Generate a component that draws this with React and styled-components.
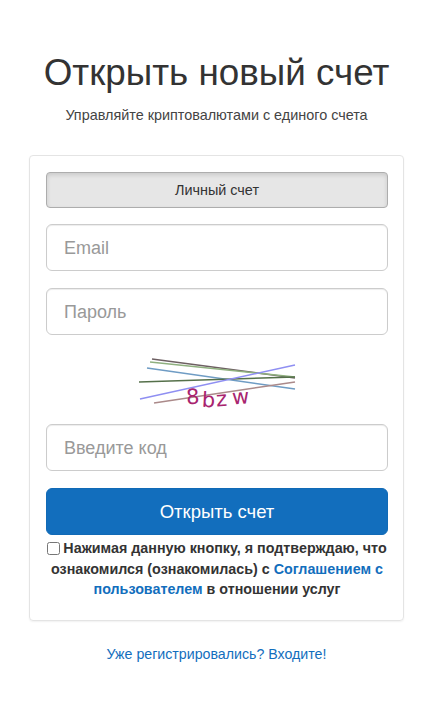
import React from "react";
import styled, { createGlobalStyle } from "styled-components";

const GlobalStyle = createGlobalStyle`
  html, body {
    margin: 0;
    background: #fff;
  }
  body {
    font-family: "Liberation Sans", Arial, sans-serif;
    color: #333;
  }
`;

const Page = styled.div`
  width: 423px;
  height: 710px;
  padding: 46px 19px 0 29px;
  box-sizing: border-box;
  overflow: hidden;
`;

const Title = styled.h1`
  margin: 0;
  font-size: 36.8px;
  line-height: 54px;
  font-weight: 400;
  text-align: center;
  color: #333;
`;

const Subtitle = styled.p`
  margin: 5px 0 0;
  font-size: 14.4px;
  line-height: 20px;
  text-align: center;
  color: #444;
`;

const Card = styled.form`
  margin-top: 30px;
  height: 466px;
  box-sizing: border-box;
  padding: 16px 15px 0 16px;
  border: 1px solid #e4e4e4;
  border-radius: 4px;
  box-shadow: 0 1px 2px rgba(0, 0, 0, 0.06);
  display: flex;
  flex-direction: column;
`;

const AccountTab = styled.div`
  height: 36px;
  box-sizing: border-box;
  display: flex;
  align-items: center;
  justify-content: center;
  font-size: 14.4px;
  color: #333;
  background: #e6e6e6;
  border: 1px solid #adadad;
  border-radius: 4px;
  box-shadow: inset 0 2px 4px rgba(0, 0, 0, 0.125);
`;

const Field = styled.input`
  display: block;
  width: 100%;
  height: 47px;
  box-sizing: border-box;
  margin-top: ${props => props.$top}px;
  padding: 2px 17px 0;
  font-family: inherit;
  font-size: 18px;
  color: #555;
  background: #fff;
  border: 1px solid #ccc;
  border-radius: 6px;
  box-shadow: inset 0 1px 1px rgba(0, 0, 0, 0.075);

  &::placeholder {
    color: #999;
    opacity: 1;
  }
`;

const Captcha = styled.svg`
  display: block;
  align-self: center;
  margin-top: 13px;
  width: 163px;
  height: 64px;
`;

const CaptchaLetter = styled.text`
  font-family: "DejaVu Sans", sans-serif;
  font-size: 21px;
  fill: #a8246f;
`;

const SubmitButton = styled.button`
  height: 47px;
  margin-top: 17px;
  font-family: inherit;
  font-size: 18.5px;
  color: #fff;
  background: #126ebd;
  border: 1px solid #116ab6;
  border-radius: 6px;
`;

const Agreement = styled.div`
  margin-top: 3px;
  font-size: 14.3px;
  line-height: 20.5px;
  font-weight: 700;
  text-align: center;
  color: #333;
`;

const AgreementBox = styled.input`
  width: 13px;
  height: 13px;
  margin: 0 3px 0 0;
  vertical-align: -2px;
`;

const TextLink = styled.a`
  color: #126ebd;
  text-decoration: none;
`;

const LoginLine = styled.div`
  margin-top: 23px;
  font-size: 14.2px;
  line-height: 20px;
  text-align: center;
`;

const captchaLines = [
  { x1: 17, y1: 11, x2: 160, y2: 30, stroke: "#6d5f62" },
  { x1: 15, y1: 14, x2: 160, y2: 29, stroke: "#8fb07f" },
  { x1: 12, y1: 20, x2: 160, y2: 41, stroke: "#6f9cc4" },
  { x1: 4, y1: 34, x2: 160, y2: 29, stroke: "#55704a" },
  { x1: 5, y1: 51, x2: 160, y2: 17, stroke: "#8f8ff2" },
  { x1: 19, y1: 55, x2: 160, y2: 34, stroke: "#ab8a8a" }
];

const App = () => {
  return (
    <Page>
      <GlobalStyle />
      <Title>Открыть новый счет</Title>
      <Subtitle>Управляйте криптовалютами с единого счета</Subtitle>
      <Card>
        <AccountTab>Личный счет</AccountTab>
        <Field $top={16} type="text" placeholder="Email" />
        <Field $top={17} type="password" placeholder="Пароль" />
        <Captcha viewBox="1 0 163 64">
          {captchaLines.map(line => (
            <line key={line.stroke} {...line} strokeWidth="1.5" />
          ))}
          <CaptchaLetter x="51" y="56" transform="rotate(-3 56 48)">8</CaptchaLetter>
          <CaptchaLetter x="67" y="59" transform="rotate(3 72 50)">b</CaptchaLetter>
          <CaptchaLetter x="81" y="58" transform="rotate(-4 87 50)">z</CaptchaLetter>
          <CaptchaLetter x="97" y="56" transform="rotate(-4 104 48)">w</CaptchaLetter>
        </Captcha>
        <Field $top={12} type="text" placeholder="Введите код" />
        <SubmitButton type="button">Открыть счет</SubmitButton>
        <Agreement>
          <AgreementBox type="checkbox" />
          Нажимая данную кнопку, я подтверждаю, что ознакомился (ознакомилась) с{" "}
          <TextLink href="#">Соглашением с пользователем</TextLink> в отношении услуг
        </Agreement>
      </Card>
      <LoginLine>
        <TextLink href="#">Уже регистрировались? Входите!</TextLink>
      </LoginLine>
    </Page>
  );
};

export default App;
